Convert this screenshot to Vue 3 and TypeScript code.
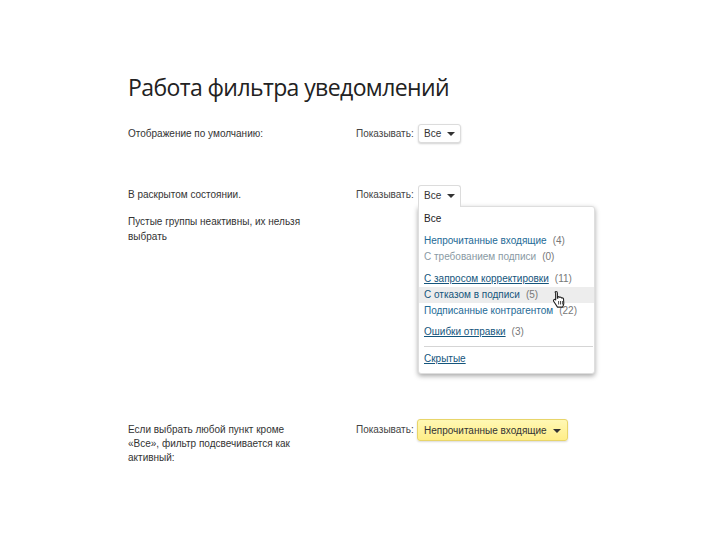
<script setup lang="ts">
interface Item { label: string; count: string; kind: 'link' | 'plain' | 'dashless' | 'hover'; }
const groups: Item[][] = [
  [
    { label: 'Непрочитанные входящие', count: '(4)', kind: 'plain' },
    { label: 'С требованием подписи', count: '(0)', kind: 'dashless' },
  ],
  [
    { label: 'С запросом корректировки', count: '(11)', kind: 'link' },
    { label: 'С отказом в подписи', count: '(5)', kind: 'hover' },
    { label: 'Подписанные контрагентом', count: '(22)', kind: 'plain' },
  ],
  [{ label: 'Ошибки отправки', count: '(3)', kind: 'link' }],
];
</script>

<template>
  <main class="page">
    <h1 class="title">Работа фильтра уведомлений</h1>

    <section class="row row-default">
      <div class="desc"><p>Отображение по умолчанию:</p></div>
      <div class="control">
        <span class="show">Показывать:</span>
        <span class="btn">Все<i class="caret"></i></span>
      </div>
    </section>

    <section class="row row-open">
      <div class="desc">
        <p>В раскрытом состоянии.</p>
        <p class="second">Пустые группы неактивны, их нельзя выбрать</p>
      </div>
      <div class="control control-open">
        <span class="show">Показывать:</span>
        <div class="dropdown">
          <span class="btn btn-open">Все<i class="caret"></i></span>
          <div class="panel">
            <div class="all">Все</div>
            <div v-for="(group, g) in groups" :key="g" class="group">
              <div v-for="item in group" :key="item.label" class="item" :class="item.kind">
                <span class="label">{{ item.label }}</span><span class="count">{{ item.count }}</span>
              </div>
            </div>
            <div class="divider"></div>
            <div class="item link"><span class="label">Скрытые</span></div>
            <svg class="cursor" width="16" height="20" viewBox="0 0 16 20">
              <path d="M4 1.500c.9 0 1.400.6 1.400 1.400v5.400l.5-.1V7c.7-.6 1.600-.3 1.800.4.7-.5 1.700-.2 1.900.6.8-.4 1.800 0 1.900.9l.3 4.400c0 1.500-.5 2.800-1.300 3.800H5.500L1.800 11.500c-.5-.7-.4-1.500.2-1.900.6-.4 1.200-.2 1.700.3l-.1-7C2.700 2 3.200 1.500 4 1.500z" fill="#fff" stroke="#222" stroke-width="1.100" stroke-linejoin="round"/>
              <path d="M6.600 11v3.500M8.500 11v3.500M10.400 11v3.500" stroke="#222" stroke-width=".8" fill="none"/>
            </svg>
          </div>
        </div>
      </div>
    </section>

    <section class="row row-active">
      <div class="desc"><p>Если выбрать любой пункт кроме «Все», фильтр подсвечивается как активный:</p></div>
      <div class="control">
        <span class="show">Показывать:</span>
        <span class="btn btn-active">Непрочитанные входящие<i class="caret"></i></span>
      </div>
    </section>
  </main>
</template>

<style scoped>
.page {
  width: 720px;
  height: 540px;
  box-sizing: border-box;
  padding: 71px 0 0 128px;
  background: #fff;
  color: #333;
  font-family: "Liberation Sans", Arial, sans-serif;
  font-size: 10px;
  line-height: 15px;
  overflow: hidden;
}
.title {
  margin: 0;
  font-family: "Open Sans", "Noto Sans", sans-serif;
  font-size: 23px;
  font-weight: 400;
  line-height: 32px;
  letter-spacing: -0.6px;
  color: #222;
}
.row { display: flex; }
.row-default { margin-top: 21px; height: 40px; }
.row-open { margin-top: 21px; height: 234px; }
.row-active { height: 60px; }
.desc { width: 228px; flex: none; padding-top: 2px; }
.desc p { margin: 0; width: 178px; }
.desc .second { margin-top: 12px; }
.row-active .desc { padding-top: 4px; line-height: 14px; }
.control { display: flex; align-items: flex-start; }
.show { width: 62px; padding-top: 2px; flex: none; color: #444; }
.row-active .show { padding-top: 3px; }
.btn {
  display: inline-flex;
  align-items: center;
  box-sizing: border-box;
  height: 19px;
  padding: 0 5px 0 5px;
  border: 1px solid #dcdcdc;
  border-radius: 3px;
  background: #fff;
  box-shadow: 0 1px 2px rgba(0, 0, 0, .18);
}
.caret {
  width: 0;
  height: 0;
  margin-left: 6px;
  margin-top: 1px;
  border-left: 4px solid transparent;
  border-right: 4px solid transparent;
  border-top: 4px solid #333;
}
.dropdown { position: relative; width: 177px; }
.btn-open {
  position: relative;
  z-index: 2;
  height: 22px;
  border-bottom: 0;
  border-radius: 3px 3px 0 0;
  box-shadow: none;
  padding-bottom: 2px;
}
.panel {
  position: relative;
  box-sizing: border-box;
  height: 168px;
  margin-top: -1px;
  padding: 4px 0 0;
  border: 1px solid #dedede;
  border-radius: 0 3px 3px 3px;
  background: #fff;
  box-shadow: 0 2px 5px rgba(0, 0, 0, .35);
}
.all { padding-left: 5px; color: #222; height: 22px; line-height: 15px; }
.group { margin-bottom: 5.5px; }
.item { padding-left: 5px; height: 16px; line-height: 16px; color: #1d6a96; white-space: nowrap; }
.count { color: #777; margin-left: 6px; }
.link .label { text-decoration: underline; color: #14557c; }
.dashless { color: #8a9aa4; }
.hover { background: #ededed; color: #14557c; }
.divider { height: 1px; margin: 1px 1px 4px 5px; background: #d5d5d5; }
.cursor { position: absolute; left: 133px; top: 83px; }
.btn-active {
  height: 22px;
  margin-left: -1px;
  padding: 0 6px 0 6px;
  background: linear-gradient(#fff8b4, #ffee88);
  border-color: #e8d56a;
  box-shadow: 0 1px 2px rgba(0, 0, 0, .15);
}
</style>
